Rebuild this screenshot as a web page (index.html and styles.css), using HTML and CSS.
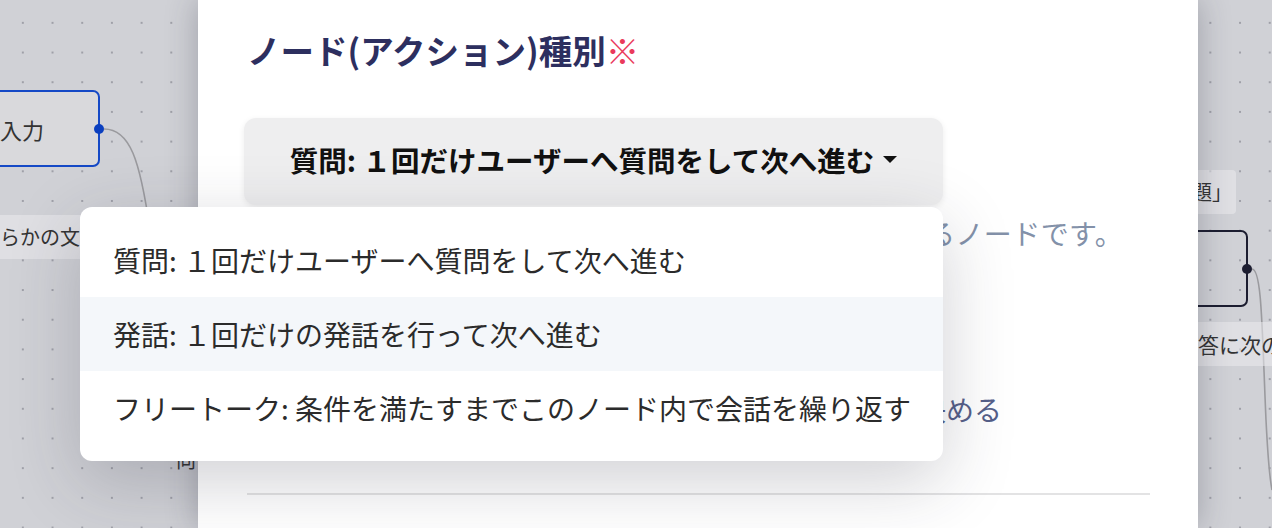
FILE: index.html
```html
<!DOCTYPE html>
<html lang="ja">
<head>
  <meta charset="UTF-8" />
  <title>ノード設定</title>
  <link rel="stylesheet" href="styles.css">
</head>
<body>
  <div class="canvas">
    <svg class="edges" width="1272" height="528" viewBox="0 0 1272 528">
      <path d="M104 129 C 130 129, 140 160, 150 230" />
      <path d="M1252 269 C 1262 269, 1262 330, 1266 420 C 1268 460, 1270 480, 1272 490" />
    </svg>

    <div class="node node-left">テキスト入力<span class="handle"></span></div>
    <div class="edge-label label-left">何らかの文字列</div>
    <div class="edge-label label-under">向</div>

    <div class="edge-label label-right-top">「話題」</div>
    <div class="node node-right"><span class="handle"></span></div>
    <div class="edge-label label-right-bottom">回答に次の</div>
  </div>

  <div class="modal">
    <h2 class="field-title">ノード(アクション)種別<span class="required">※</span></h2>

    <div class="select-wrap">
      <button class="select-btn">質問: １回だけユーザーへ質問をして次へ進む<span class="caret"></span></button>

      <ul class="select-menu">
        <li>質問: １回だけユーザーへ質問をして次へ進む</li>
        <li class="hover">発話: １回だけの発話を行って次へ進む</li>
        <li>フリートーク: 条件を満たすまでこのノード内で会話を繰り返す</li>
      </ul>
    </div>

    <p class="field-desc">ユーザーへ一度だけ質問を行い、回答を得て次へ進めるノードです。</p>
    <p class="field-link">回答内容に応じて次に進むノードの分岐条件を自動で決める</p>

    <hr class="divider">
  </div>
</body>
</html>
```

FILE: styles.css
```css
body {
  margin: 0;
  width: 1272px;
  height: 528px;
  overflow: hidden;
  position: relative;
  font-family: "Noto Sans CJK JP", "Noto Sans", sans-serif;
  color: #333;
}

/* flow canvas behind the modal */
.canvas {
  position: absolute;
  inset: 0;
  background-color: #d0d1d6;
  background-image: radial-gradient(circle, #9fa0a8 1.1px, transparent 1.5px);
  background-size: 29.7px 29.7px;
  background-position: 8px 8px;
}
.edges {
  position: absolute;
  left: 0;
  top: 0;
}
.edges path {
  fill: none;
  stroke: #9a9a9e;
  stroke-width: 1.6;
}
.node {
  position: absolute;
  box-sizing: border-box;
  height: 77px;
  border-radius: 7px;
  display: flex;
  align-items: center;
  font-size: 22px;
  color: #333;
}
.node-left {
  left: -140px;
  top: 90px;
  width: 240px;
  border: 2px solid #1549c6;
  background: #d9d9dc;
  justify-content: flex-end;
  padding-right: 54px;
}
.node-right {
  left: 1080px;
  top: 230px;
  width: 168px;
  border: 2px solid #1c1d30;
}
.handle {
  position: absolute;
  right: -6px;
  top: 32px;
  width: 10px;
  height: 10px;
  border-radius: 50%;
}
.node-left .handle {
  background: #0b3fbf;
}
.node-right .handle {
  background: #1c1d30;
}
.edge-label {
  position: absolute;
  font-size: 20px;
  line-height: 44px;
  padding: 0 4px;
  border-radius: 4px;
  background: rgba(235, 235, 238, 0.55);
  color: #333;
  white-space: nowrap;
}
.label-left {
  left: -24px;
  top: 215px;
}
.label-under {
  left: 172px;
  top: 438px;
  background: none;
}
.label-right-top {
  left: 1148px;
  top: 170px;
}
.label-right-bottom {
  left: 1173px;
  top: 322px;
  font-size: 21px;
}

/* modal panel */
.modal {
  position: absolute;
  left: 198px;
  top: 0;
  width: 1000px;
  height: 528px;
  box-sizing: border-box;
  padding: 24px 48px 0 46px;
  background: #fff;
  box-shadow: 0 0 30px rgba(40, 42, 60, 0.3);
}
.field-title {
  margin: 0 0 0 3px;
  font-size: 33.5px;
  line-height: 52px;
  font-weight: 700;
  color: #2d2f5f;
}
.required {
  color: #ea3a5c;
  font-weight: 400;
}

.select-wrap {
  position: relative;
  margin-top: 42px;
  width: 699px;
}
.select-btn {
  display: flex;
  align-items: center;
  justify-content: center;
  width: 699px;
  height: 87px;
  border: none;
  border-radius: 12px;
  background: #eeeeef;
  box-shadow: 0 2px 6px rgba(0, 0, 0, 0.08);
  font-family: inherit;
  font-size: 28.5px;
  font-weight: 700;
  color: #111;
  padding: 0 0 4px;
}
.caret {
  width: 0;
  height: 0;
  margin-left: 9px;
  border-left: 7px solid transparent;
  border-right: 7px solid transparent;
  border-top: 7px solid #111;
}
.select-menu {
  position: absolute;
  left: -164px;
  top: 89px;
  width: 863px;
  margin: 0;
  padding: 16px 0;
  list-style: none;
  background: #fff;
  border-radius: 12px;
  box-shadow: 0 20px 70px rgba(40, 42, 60, 0.22);
  z-index: 10;
}
.select-menu li {
  height: 74px;
  display: flex;
  align-items: center;
  padding: 0 33px;
  font-size: 28px;
  color: #2b2b2b;
  white-space: nowrap;
}
.select-menu li.hover {
  background: #f4f7fa;
}

.field-desc {
  margin: 8px 0 0 2px;
  font-size: 28px;
  line-height: 40px;
  letter-spacing: 0.4px;
  color: #8391a9;
}
.field-link {
  margin: 136px 0 0 2px;
  font-size: 28px;
  line-height: 40px;
  color: #566089;
}
.divider {
  margin: 64px 0 0 3px;
  width: 903px;
  border: none;
  border-top: 2px solid #e3e3e4;
}
```
